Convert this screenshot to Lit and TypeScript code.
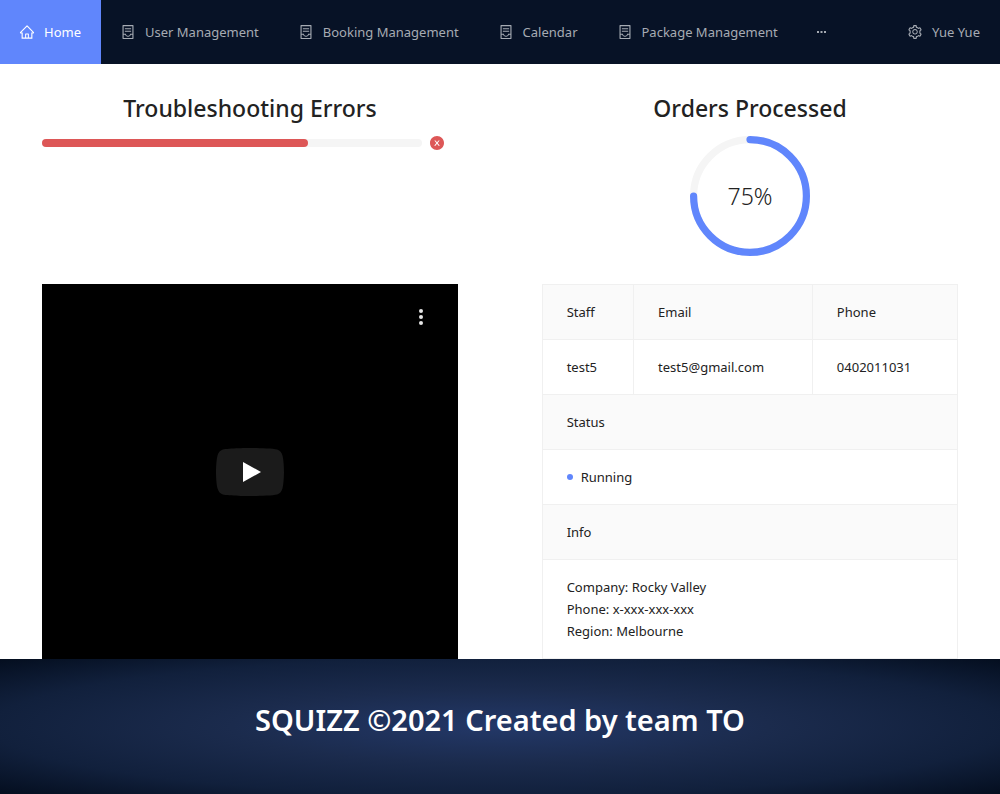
import { LitElement, html, css, svg } from "lit";
import { customElement } from "lit/decorators.js";

const HOME =
  "M946.5 505L560.1 118.8l-25.9-25.9a31.5 31.5 0 00-44.4 0L77.5 505a63.9 63.9 0 00-18.8 46c.4 35.2 29.7 63.3 64.9 63.3h42.5V940h691.8V614.3h43.4c17.1 0 33.2-6.7 45.3-18.8a63.6 63.6 0 0018.7-45.3c0-17-6.7-33.1-18.8-45.2zM568 868H456V664h112v204zm217.9-325.7V868H632V640c0-22.1-17.9-40-40-40H432c-22.1 0-40 17.9-40 40v228H238.1V542.3h-96l370-369.7 23.1 23.1L882 542.3h-96.1z";
const CONTAINER =
  "M832 64H192c-17.7 0-32 14.3-32 32v832c0 17.7 14.3 32 32 32h640c17.7 0 32-14.3 32-32V96c0-17.7-14.3-32-32-32zm-40 824H232V687h97.9c11.6 32.8 32 62.3 59.1 84.7 34.5 28.5 78.2 44.3 123 44.3s88.5-15.7 123-44.3c27.1-22.4 47.5-51.9 59.1-84.7H792v201zm0-264H643.6l-5.2 24.7C626.4 708.5 573.2 752 512 752s-114.4-43.5-126.5-103.3l-5.2-24.7H232V136h560v488zM320 341h384c4.4 0 8-3.6 8-8v-48c0-4.4-3.6-8-8-8H320c-4.4 0-8 3.6-8 8v48c0 4.4 3.6 8 8 8zm0 160h384c4.4 0 8-3.6 8-8v-48c0-4.4-3.6-8-8-8H320c-4.4 0-8 3.6-8 8v48c0 4.4 3.6 8 8 8z";
const SETTING =
  "M924.8 625.7l-65.5-56c3.1-19 4.7-38.4 4.7-57.8s-1.6-38.8-4.7-57.8l65.5-56a32.03 32.03 0 009.3-35.2l-.9-2.6a443.74 443.74 0 00-79.7-137.9l-1.8-2.1a32.12 32.12 0 00-35.1-9.5l-81.3 28.9c-30-24.6-63.5-44-99.7-57.6l-15.7-85a32.05 32.05 0 00-25.8-25.7l-2.7-.5c-52.1-9.4-106.9-9.4-159 0l-2.7.5a32.05 32.05 0 00-25.8 25.7l-15.8 85.4a351.86 351.86 0 00-99 57.4l-81.9-29.1a32 32 0 00-35.1 9.5l-1.8 2.1a446.02 446.02 0 00-79.7 137.9l-.9 2.6c-4.5 12.5-.8 26.5 9.3 35.2l66.3 56.6c-3.1 18.8-4.6 38-4.6 57.1 0 19.2 1.5 38.4 4.6 57.1L99 625.5a32.03 32.03 0 00-9.3 35.2l.9 2.6c18.1 50.4 44.9 96.9 79.7 137.9l1.8 2.1a32.12 32.12 0 0035.1 9.5l81.9-29.1c29.8 24.5 63.1 43.9 99 57.4l15.8 85.4a32.05 32.05 0 0025.8 25.7l2.7.5a449.4 449.4 0 00159 0l2.7-.5a32.05 32.05 0 0025.8-25.7l15.7-85a350 350 0 0099.7-57.6l81.3 28.9a32 32 0 0035.1-9.5l1.8-2.1c34.8-41.1 61.6-87.5 79.7-137.9l.9-2.6c4.5-12.3.8-26.3-9.3-35zM788.3 465.9c2.5 15.1 3.8 30.6 3.8 46.1s-1.3 31-3.8 46.1l-6.6 40.1 74.7 63.9a370.03 370.03 0 01-42.6 73.6L721 702.8l-31.4 25.8c-23.9 19.6-50.5 35-79.3 45.8l-38.1 14.3-17.9 97a377.5 377.5 0 01-85 0l-17.9-97.2-37.8-14.5c-28.5-10.8-55-26.2-78.7-45.7l-31.4-25.9-93.4 33.2c-17-22.9-31.2-47.6-42.6-73.6l75.5-64.5-6.5-40c-2.4-14.9-3.7-30.3-3.7-45.5 0-15.3 1.2-30.6 3.7-45.5l6.5-40-75.5-64.5c11.3-26.1 25.6-50.7 42.6-73.6l93.4 33.2 31.4-25.9c23.7-19.5 50.2-34.9 78.7-45.7l37.9-14.3 17.9-97.2c28.1-3.2 56.8-3.2 85 0l17.9 97 38.1 14.3c28.7 10.8 55.4 26.2 79.3 45.8l31.4 25.8 92.8-32.9c17 22.9 31.2 47.6 42.6 73.6L781.8 426l6.5 39.9zM512 326c-97.2 0-176 78.8-176 176s78.8 176 176 176 176-78.8 176-176-78.8-176-176-176zm79.2 255.2A111.6 111.6 0 01512 614c-29.9 0-58-11.7-79.2-32.8A111.6 111.6 0 01400 502c0-29.9 11.7-58 32.8-79.2C454 401.6 482.1 390 512 390c29.9 0 58 11.6 79.2 32.8A111.6 111.6 0 01624 502c0 29.9-11.7 58-32.8 79.2z";
const CLOSE_CIRCLE =
  "M512 64C264.6 64 64 264.6 64 512s200.6 448 448 448 448-200.6 448-448S759.4 64 512 64zm165.4 618.2l-66-.3L512 563.4l-99.3 118.4-66.1.3c-4.4 0-8-3.5-8-8 0-1.9.7-3.7 1.9-5.2l130.1-155L340.5 359a8.32 8.32 0 01-1.9-5.2c0-4.4 3.6-8 8-8l66.1.3L512 464.6l99.3-118.4 66-.3c4.4 0 8 3.5 8 8 0 1.9-.7 3.7-1.9 5.2L553.5 514l130 155c1.2 1.5 1.9 3.3 1.9 5.2 0 4.4-3.6 8-8 8z";

const icon = (d: string) => html`<svg
  class="icon"
  width="16"
  height="16"
  viewBox="0 0 1024 1024"
  fill="currentColor"
  aria-hidden="true"
>
  ${svg`<path d=${d}></path>`}
</svg>`;

const NAV = [
  { label: "Home", icon: HOME, active: true },
  { label: "User Management", icon: CONTAINER },
  { label: "Booking Management", icon: CONTAINER },
  { label: "Calendar", icon: CONTAINER },
  { label: "Package Management", icon: CONTAINER },
];

@customElement("app-root")
export class AppRoot extends LitElement {
  static styles = css`
    :host {
      display: flex;
      flex-direction: column;
      min-height: 100vh;
      background: #fff;
      color: #222;
      font-family: "Noto Sans", "Open Sans", sans-serif;
      font-size: 13px;
      line-height: 22px;
    }
    * {
      box-sizing: border-box;
    }
    .nav {
      display: flex;
      background: #071226;
    }
    .item {
      display: flex;
      align-items: center;
      gap: 9px;
      height: 64px;
      padding: 0 20px 0 19px;
      border: 0;
      background: none;
      color: #a6abb3;
      font: inherit;
      text-decoration: none;
      white-space: nowrap;
      cursor: pointer;
    }
    .active {
      background: #6086fc;
      color: #fff;
    }
    .user {
      margin-left: auto;
    }
    .icon {
      display: block;
      flex: none;
    }
    .grid {
      display: grid;
      grid-template-columns: 1fr 10fr 2fr 10fr 1fr;
      grid-template-rows: 220px auto;
    }
    .left {
      grid-column: 2;
    }
    .right {
      grid-column: 4;
    }
    .stat {
      padding-top: 28px;
    }
    .title {
      margin: 0 0 12px;
      font-size: 23px;
      line-height: 32px;
      font-weight: 500;
      text-align: center;
    }
    .line {
      display: flex;
      align-items: center;
      gap: 8px;
      height: 14px;
    }
    .track {
      flex: 1;
      height: 8px;
      border-radius: 4px;
      background: #f5f5f5;
    }
    .fill {
      height: 8px;
      border-radius: 4px;
      background: #dd5757;
    }
    .mark {
      display: flex;
      width: 29px;
      margin-left: -1px;
      color: #dd5757;
    }
    .ring {
      display: grid;
      place-items: center;
    }
    .ring > * {
      grid-area: 1 / 1;
    }
    .percent {
      font-size: 23px;
      font-weight: 300;
      line-height: 24px;
    }
    .video {
      display: flex;
      flex-direction: column;
      height: 375px;
      background: #000;
    }
    .more {
      align-self: flex-end;
      margin: 21px 25px 0 0;
      padding: 0;
      border: 0;
      background: none;
      cursor: pointer;
    }
    .play {
      align-self: center;
      margin-top: 119px;
      padding: 0;
      border: 0;
      background: none;
      cursor: pointer;
    }
    .more svg,
    .play svg {
      display: block;
    }
    .table {
      width: 100%;
      table-layout: fixed;
      border-collapse: collapse;
      text-align: left;
    }
    .c1 {
      width: 22%;
    }
    .c2 {
      width: 43%;
    }
    .table th,
    .table td {
      padding: 16px 24px;
      border: 1px solid #f0f0f0;
      font-weight: 400;
    }
    .table th {
      background: #fafafa;
    }
    .status {
      display: flex;
      align-items: center;
      gap: 8px;
    }
    .dot {
      width: 6px;
      height: 6px;
      border-radius: 50%;
      background: #6086fc;
    }
    .footer {
      flex: 1;
      padding: 40px 50px;
      background: radial-gradient(#233868, #1b2b4d 38%, #11203c 72%, #040e1f);
      color: #fff;
      text-align: center;
    }
    .credit {
      margin: 0;
      font-size: 29px;
      line-height: 42px;
      font-weight: 600;
    }
  `;

  render() {
    return html`
      <nav class="nav" aria-label="Main">
        ${NAV.map(
          (n) => html`<a class="item ${n.active ? "active" : ""}" href="#">${icon(n.icon)}<span>${n.label}</span></a>`
        )}
        <button class="item" aria-label="More pages">
          <svg width="9" height="2" viewBox="0 0 9 2" fill="currentColor" aria-hidden="true">
            <path d="M0 0h2v2H0zM3.500 0h2v2h-2zM7 0h2v2H7z"></path>
          </svg>
        </button>
        <a class="item user" href="#">${icon(SETTING)}<span>Yue Yue</span></a>
      </nav>
      <main class="grid">
        <section class="stat left">
          <h2 class="title">Troubleshooting Errors</h2>
          <div class="line">
            <div class="track" role="progressbar" aria-label="Troubleshooting Errors" aria-valuenow="70">
              <div class="fill" style="width:70%"></div>
            </div>
            <span class="mark">${icon(CLOSE_CIRCLE)}</span>
          </div>
        </section>
        <section class="stat right">
          <h2 class="title">Orders Processed</h2>
          <div class="ring">
            <svg width="120" height="120" viewBox="0 0 100 100" fill="none" stroke-width="6" aria-hidden="true">
              <circle cx="50" cy="50" r="47" stroke="#f5f5f5"></circle>
              <circle
                cx="50"
                cy="50"
                r="47"
                stroke="#6086fc"
                stroke-linecap="round"
                pathLength="100"
                stroke-dasharray="75 100"
                transform="rotate(-90 50 50)"
              ></circle>
            </svg>
            <span class="percent">75%</span>
          </div>
        </section>
        <section class="video left">
          <button class="more" aria-label="More options">
            <svg width="24" height="24" viewBox="0 0 24 24" fill="#e6e6e6">
              <circle cx="12" cy="6" r="2"></circle>
              <circle cx="12" cy="12" r="2"></circle>
              <circle cx="12" cy="18" r="2"></circle>
            </svg>
          </button>
          <button class="play" aria-label="Play video">
            <svg width="68" height="48" viewBox="0 0 68 48">
              <path
                fill="#1b1b1b"
                d="M66.52 7.740c-.78-2.930-2.490-5.410-5.420-6.190C55.790.13 34 0 34 0S12.210.13 6.900 1.550c-2.930.78-4.630 3.260-5.420 6.190C.06 13.050 0 24 0 24s.06 10.950 1.480 16.260c.78 2.930 2.490 5.410 5.420 6.190C12.210 47.870 34 48 34 48s21.790-.13 27.100-1.550c2.930-.78 4.640-3.260 5.420-6.190C67.940 34.950 68 24 68 24s-.06-10.950-1.480-16.260z"
              ></path>
              <path fill="#fff" d="M45 24 27 14v20z"></path>
            </svg>
          </button>
        </section>
        <section class="right">
          <table class="table">
            <colgroup>
              <col class="c1" />
              <col class="c2" />
              <col />
            </colgroup>
            <tbody>
              <tr><th scope="col">Staff</th><th scope="col">Email</th><th scope="col">Phone</th></tr>
              <tr><td>test5</td><td>test5@gmail.com</td><td>0402011031</td></tr>
              <tr><th colspan="3">Status</th></tr>
              <tr><td colspan="3"><span class="status"><span class="dot"></span>Running</span></td></tr>
              <tr><th colspan="3">Info</th></tr>
              <tr><td colspan="3">Company: Rocky Valley<br />Phone: x-xxx-xxx-xxx<br />Region: Melbourne</td></tr>
            </tbody>
          </table>
        </section>
      </main>
      <footer class="footer">
        <h1 class="credit">SQUIZZ ©2021 Created by team TO</h1>
      </footer>
    `;
  }
}
